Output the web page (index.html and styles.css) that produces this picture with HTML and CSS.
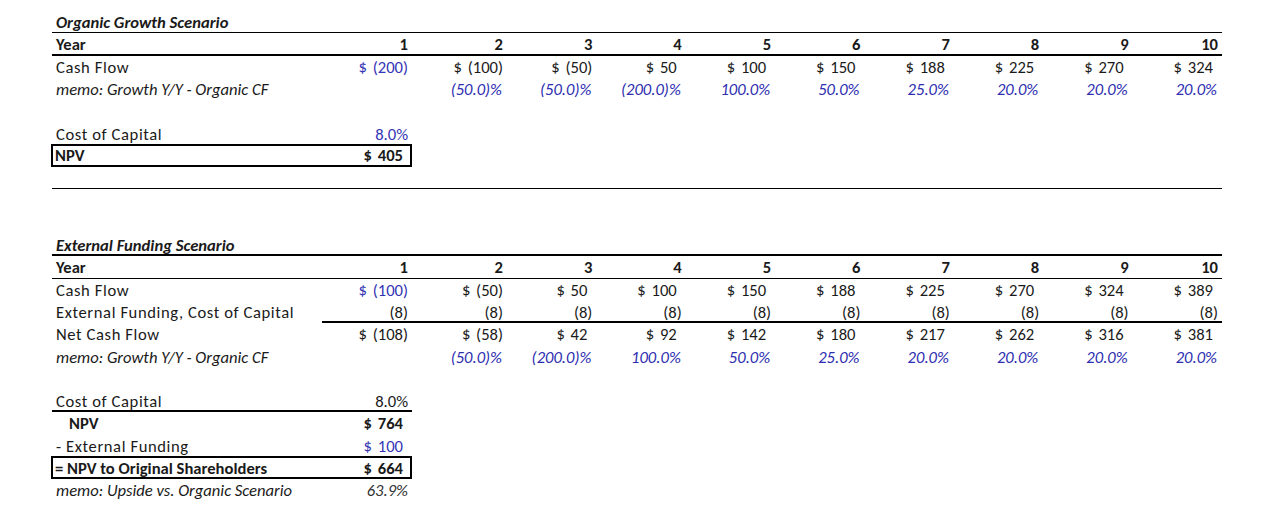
FILE: index.html
```html
<!DOCTYPE html>
<html>
<head>
<meta charset="utf-8">
<link rel="stylesheet" href="styles.css">
</head>
<body>
<div class="sheet">
  <!-- Organic Growth Scenario -->
  <div class="row rule-thin"><div class="lbl title">Organic Growth Scenario</div></div>
  <div class="row rule-thick">
    <div class="lbl b">Year</div>
    <div class="c b">1</div><div class="c b">2</div><div class="c b">3</div><div class="c b">4</div><div class="c b">5</div>
    <div class="c b">6</div><div class="c b">7</div><div class="c b">8</div><div class="c b">9</div><div class="c b">10</div>
  </div>
  <div class="row">
    <div class="lbl sp">Cash Flow</div>
    <div class="c blue">$ (200)</div><div class="c">$ (100)</div><div class="c">$ (50)</div><div class="c pos">$ 50</div><div class="c pos">$ 100</div>
    <div class="c pos">$ 150</div><div class="c pos">$ 188</div><div class="c pos">$ 225</div><div class="c pos">$ 270</div><div class="c pos">$ 324</div>
  </div>
  <div class="row">
    <div class="lbl it">memo: Growth Y/Y - Organic CF</div>
    <div class="c"></div><div class="c pct">(50.0)%</div><div class="c pct">(50.0)%</div><div class="c pct">(200.0)%</div><div class="c pct">100.0%</div>
    <div class="c pct">50.0%</div><div class="c pct">25.0%</div><div class="c pct">20.0%</div><div class="c pct">20.0%</div><div class="c pct">20.0%</div>
  </div>
  <div class="row"></div>
  <div class="row">
    <div class="lbl sp">Cost of Capital</div>
    <div class="c blue">8.0%</div>
  </div>
  <div class="row">
    <div class="box">
      <div class="lbl b">NPV</div>
      <div class="c b pos">$ 405</div>
    </div>
  </div>
  <div class="row rule-thin"></div>
  <div class="row"></div>
  <div class="row"></div>

  <!-- External Funding Scenario -->
  <div class="row rule-thick"><div class="lbl title">External Funding Scenario</div></div>
  <div class="row rule-thin">
    <div class="lbl b">Year</div>
    <div class="c b">1</div><div class="c b">2</div><div class="c b">3</div><div class="c b">4</div><div class="c b">5</div>
    <div class="c b">6</div><div class="c b">7</div><div class="c b">8</div><div class="c b">9</div><div class="c b">10</div>
  </div>
  <div class="row">
    <div class="lbl sp">Cash Flow</div>
    <div class="c blue">$ (100)</div><div class="c">$ (50)</div><div class="c pos">$ 50</div><div class="c pos">$ 100</div><div class="c pos">$ 150</div>
    <div class="c pos">$ 188</div><div class="c pos">$ 225</div><div class="c pos">$ 270</div><div class="c pos">$ 324</div><div class="c pos">$ 389</div>
  </div>
  <div class="row">
    <div class="lbl sp">External Funding, Cost of Capital</div>
    <div class="c ul">(8)</div><div class="c ul">(8)</div><div class="c ul">(8)</div><div class="c ul">(8)</div><div class="c ul">(8)</div>
    <div class="c ul">(8)</div><div class="c ul">(8)</div><div class="c ul">(8)</div><div class="c ul">(8)</div><div class="c ul">(8)</div>
  </div>
  <div class="row">
    <div class="lbl sp">Net Cash Flow</div>
    <div class="c">$ (108)</div><div class="c">$ (58)</div><div class="c pos">$ 42</div><div class="c pos">$ 92</div><div class="c pos">$ 142</div>
    <div class="c pos">$ 180</div><div class="c pos">$ 217</div><div class="c pos">$ 262</div><div class="c pos">$ 316</div><div class="c pos">$ 381</div>
  </div>
  <div class="row">
    <div class="lbl it">memo: Growth Y/Y - Organic CF</div>
    <div class="c"></div><div class="c pct">(50.0)%</div><div class="c pct">(200.0)%</div><div class="c pct">100.0%</div><div class="c pct">50.0%</div>
    <div class="c pct">25.0%</div><div class="c pct">20.0%</div><div class="c pct">20.0%</div><div class="c pct">20.0%</div><div class="c pct">20.0%</div>
  </div>
  <div class="row"></div>
  <div class="row">
    <div class="lbl sp ul">Cost of Capital</div>
    <div class="c ul">8.0%</div>
  </div>
  <div class="row">
    <div class="lbl b indent">NPV</div>
    <div class="c b pos">$ 764</div>
  </div>
  <div class="row">
    <div class="lbl sp">- External Funding</div>
    <div class="c blue pos">$ 100</div>
  </div>
  <div class="row">
    <div class="box">
      <div class="lbl b">= NPV to Original Shareholders</div>
      <div class="c b pos">$ 664</div>
    </div>
  </div>
  <div class="row">
    <div class="lbl it">memo: Upside vs. Organic Scenario</div>
    <div class="c it grey">63.9%</div>
  </div>
</div>
</body>
</html>
```

FILE: styles.css
```css
* { box-sizing: border-box; }
html, body {
  margin: 0;
  padding: 0;
  background: #ffffff;
}
body {
  font-family: "Carlito", "Lato", "Liberation Sans", sans-serif;
  font-size: 16.6px;
  color: #1a1a1a;
}
.sheet {
  padding: 11px 0 0 52px;
  width: 1222px;
}
.row {
  display: grid;
  grid-template-columns: 270px 90px 95px repeat(8, 89.375px);
  height: 22.3px;
  align-items: stretch;
}
.row > div, .box > div {
  display: flex;
  align-items: center;
  white-space: nowrap;
}
.lbl {
  padding-left: 4px;
}
.c {
  justify-content: flex-end;
  padding-right: 4px;
  word-spacing: 2px;
}
.pos { padding-right: 9px; }
.b { font-weight: 700; }
.it { font-style: italic; }
.title {
  font-weight: 700;
  font-style: italic;
  grid-column: 1 / -1;
}
.sp { letter-spacing: 0.6px; }
.blue { color: #3434b4; }
.pct { color: #2d2db0; font-style: italic; padding-right: 5px; }
.grey { color: #333333; }
.indent { padding-left: 17px; }
.rule-thin { box-shadow: inset 0 -1px 0 #000; }
.rule-thick { box-shadow: inset 0 -2px 0 #000; }
.ul { box-shadow: inset 0 -2px 0 #000; }
.row > .box {
  grid-column: 1 / 3;
  display: grid;
  grid-template-columns: 270px 90px;
  box-shadow: inset 0 0 0 2px #000;
  margin-top: -1px;
  margin-left: -1px;
}
.box > .c { padding-right: 8px; }
```
